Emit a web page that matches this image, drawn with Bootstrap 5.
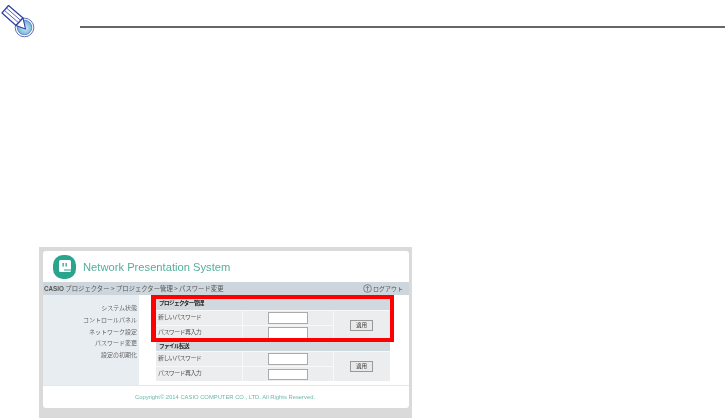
<!DOCTYPE html>
<html lang="ja">
<head>
<meta charset="utf-8">
<title>Network Presentation System</title>
<link href="https://cdn.jsdelivr.net/npm/bootstrap@5.3.0/dist/css/bootstrap.min.css" rel="stylesheet">
<style>
html,body{margin:0;height:418px;overflow:hidden;background:#fff}
body{font-family:"Noto Sans CJK JP","Liberation Sans",sans-serif;color:#555}
.note-head{height:247px;padding:5px 0 0 1px;align-items:flex-start}
.note-rule{margin:21px 0 0 45px;height:2px;background:#666;flex:1}
.shot{margin-left:39px;width:373px;height:171px;background:#dadada;padding:4px 3px 10px 4px;position:relative}
.shot-inner{height:100%;background:#fff;border-radius:3px;filter:blur(.4px)}
.top-band{height:31px;padding:1px 0 0 10px;gap:6px}
.app-name{font-family:"Liberation Sans",sans-serif;font-size:11.2px;color:#55ae9a;white-space:nowrap;margin-top:1px}
.crumb{height:13px;background:#cdd6dc;font-size:6.35px;color:#555;line-height:13px;padding:0 6px 0 1px}
.crumb b{font-family:"Liberation Sans",sans-serif;font-size:6.3px;color:#555}
.crumb-out{gap:1px;font-size:6px}
.body-band{height:90px}
.side{width:96px;background:#e8edf1;font-size:6px;text-align:right;padding:7px 2px 0 0;color:#666;line-height:11.8px}
.panel{padding:1px 0 0 17px;flex:1}
.cfg{width:234px;font-size:6px;letter-spacing:-.6px;color:#555;border-collapse:separate;border-spacing:0}
.cfg th{background:#d2d9de;color:#222;font-weight:700;height:14px;line-height:14px;padding:0 0 0 3px;font-size:5.6px}
.cfg td{background:#ecedee;border-left:1px solid #f8f8f8;border-top:1px solid #f8f8f8;padding:0;height:15px;line-height:11px}
.cfg td.lbl{width:86px;padding:0 0 3px 2px;border-left:0}
.cfg td.inp{width:91px;padding-left:25px}
.cfg td.act{text-align:center;padding-right:3px;letter-spacing:0}
.cfg .sec2 th{height:10px;line-height:10px;padding-top:1px}
.box{display:block;width:40px;height:12px;border:1px solid #aaa;background:#fff;border-radius:0;padding:0}
.cfg .tail td{height:14px}
.cfg .tail .box{height:11px}
.apply{width:23px;height:11px;border:1px solid #999;background:#e9e9e9;font-size:5.5px;line-height:9px;padding:0;color:#333;border-radius:0;display:block;margin:0 auto 0 16px}
.foot{height:22px;font-family:"Liberation Sans",sans-serif;font-size:5.83px;color:#6cb8a8;border-top:1px solid #e4e8ea;padding:1px 2px 0 0}
.red-frame{position:absolute;left:112px;top:48px;width:243px;height:47px;border:4px solid #f00;border-left-width:5px}
</style>
</head>
<body>
<div class="d-flex note-head">
  <svg width="34" height="33" viewBox="0 0 34 33" aria-hidden="true">
    <defs><radialGradient id="g" cx=".55" cy=".55" r=".6"><stop offset="0" stop-color="#cde9f1"/><stop offset="1" stop-color="#5fa6d6"/></radialGradient></defs>
    <circle cx="23.500" cy="22.500" r="9.300" fill="#fff" stroke="#5a6fc0" stroke-width="1"/>
    <circle cx="23.500" cy="22.500" r="7.300" fill="url(#g)" stroke="#3f52ad" stroke-width=".6"/>
    <path d="M1 8 7.500 .5 22 13 15 20.500z" fill="#fff" stroke="#2f3f9e" stroke-width="1.200" stroke-linejoin="round"/>
    <path d="M3.300 5.300 17.500 17.700M5.500 3 19.800 15.500" stroke="#3f52ad" stroke-width=".9" fill="none"/>
    <path d="M15 20.500 22 13 24.500 24z" fill="#fff" stroke="#2f3f9e" stroke-width="1.100" stroke-linejoin="round"/>
  </svg>
  <div class="note-rule"></div>
</div>
<div class="shot">
  <div class="shot-inner d-flex flex-column">
    <div class="top-band d-flex align-items-center">
      <svg width="24" height="24" viewBox="0 0 24 24" aria-hidden="true">
        <rect width="23" height="24" rx="10" fill="#28a58c"/>
        <rect x="6" y="5" width="12" height="12" rx="1.500" fill="#fff"/>
        <rect x="11" y="14.500" width="7" height="1" fill="#28a58c"/>
        <rect x="9.500" y="8" width="1.300" height="3.500" fill="#28a58c"/>
        <rect x="12.500" y="8" width="1.300" height="3.500" fill="#28a58c"/>
      </svg>
      <div class="app-name">Network Presentation System</div>
    </div>
    <div class="crumb d-flex justify-content-between">
      <span><b>CASIO</b> プロジェクター &gt; プロジェクター管理 &gt; パスワード変更</span>
      <span class="d-flex align-items-center crumb-out">
        <svg width="9" height="9" viewBox="0 0 9 9" aria-hidden="true"><circle cx="4.500" cy="4.500" r="3.900" fill="none" stroke="#666" stroke-width=".7"/><path d="M4.500 7.300V2.500M3 3.900 4.500 2.300 6 3.900" fill="none" stroke="#666" stroke-width=".7"/></svg>
        ログアウト
      </span>
    </div>
    <div class="body-band d-flex">
      <div class="side">
        <div>システム状態</div>
        <div>コントロールパネル</div>
        <div>ネットワーク設定</div>
        <div>パスワード変更</div>
        <div>設定の初期化</div>
      </div>
      <div class="panel">
        <table class="cfg">
          <tr><th colspan="3">プロジェクター管理</th></tr>
          <tr><td class="lbl">新しいパスワード</td><td class="inp"><input class="box" type="text" aria-label="新しいパスワード"></td><td class="act" rowspan="2"><button class="btn apply" type="button">適用</button></td></tr>
          <tr><td class="lbl">パスワード再入力</td><td class="inp"><input class="box" type="text" aria-label="パスワード再入力"></td></tr>
          <tr class="sec2"><th colspan="3">ファイル転送</th></tr>
          <tr><td class="lbl">新しいパスワード</td><td class="inp"><input class="box" type="text" aria-label="新しいパスワード"></td><td class="act" rowspan="2"><button class="btn apply" type="button">適用</button></td></tr>
          <tr class="tail"><td class="lbl">パスワード再入力</td><td class="inp"><input class="box" type="text" aria-label="パスワード再入力"></td></tr>
        </table>
      </div>
    </div>
    <div class="foot d-flex align-items-center justify-content-center">Copyright© 2014 CASIO COMPUTER CO., LTD. All Rights Reserved.</div>
  </div>
  <div class="red-frame"></div>
</div>
</body>
</html>
